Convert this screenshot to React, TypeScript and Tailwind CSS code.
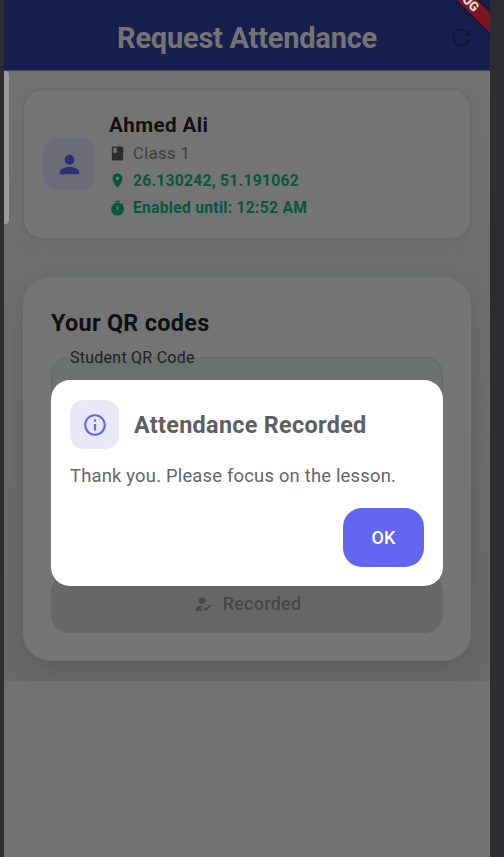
import { MdPerson, MdClass, MdLocationOn, MdTimer, MdInfoOutline, MdRefresh, MdHowToReg } from "react-icons/md";

function Header() {
  return (
    <header className="relative flex h-[71px] shrink-0 items-center justify-center border-b border-[#45485f] bg-[#181f4f] pt-[5px]">
      <h1 className="whitespace-nowrap text-[29px] font-bold leading-9 tracking-[-0.23px] text-[#747474]">Request Attendance</h1>
      <MdRefresh className="absolute right-[15px] top-[24px] size-[27px] text-[#12173a]" />
      <div className="absolute right-0 top-0 h-10 w-16 overflow-hidden">
        <div className="absolute -left-[24px] -top-[12px] flex h-[14px] w-[120px] rotate-45 items-center justify-center bg-[#7c1722] text-[13px] font-black text-[#dddddd] shadow-[0_0_6px_rgba(0,0,0,0.45)]">
          DEBUG
        </div>
      </div>
    </header>
  );
}

function StudentCard() {
  return (
    <section className="flex h-[148px] items-center gap-[14px] rounded-[18px] bg-[#747474] px-[19px] shadow-[0_0_2px_rgba(70,80,78,0.5),0_6px_14px_rgba(80,90,88,0.25)]">
      <div className="flex size-[52px] shrink-0 items-center justify-center rounded-[14px] bg-[#6c6c79]">
        <MdPerson className="size-[29px] text-[#2d2e73]" />
      </div>
      <div className="flex flex-col whitespace-nowrap pt-[5px]">
        <h2 className="-mt-px pb-px text-[20.6px] font-bold leading-[30px] tracking-[0.4px] text-[#101010]">Ahmed Ali</h2>
        <p className="flex h-[27px] items-center gap-[7px] text-[16.4px] tracking-[0.5px] text-[#3d3d3d]">
          <MdClass className="-mt-0.5 size-[17px] text-[#2c2c2c]" />
          Class 1
        </p>
        <p className="flex h-[28px] items-center gap-[7px] text-[15.6px] font-bold tracking-[0.3px] text-[#07573d]">
          <MdLocationOn className="-mt-0.5 size-[17px]" />
          26.130242, 51.191062
        </p>
        <p className="flex h-[27px] items-center gap-[7px] text-[15.6px] font-bold tracking-[0.3px] text-[#07573d]">
          <MdTimer className="-mt-0.5 size-[17px]" />
          Enabled until: 12:52 AM
        </p>
      </div>
    </section>
  );
}

function CodesCard() {
  return (
    <section className="-mx-px mt-[39px] flex h-[384px] flex-col rounded-[28px] bg-[#747474] px-[28px] pt-[30px] shadow-[0_8px_22px_rgba(60,66,64,0.3)]">
      <h2 className="text-[23.4px] font-bold leading-8 tracking-[0.3px] text-[#101010]">Your QR codes</h2>
      <fieldset className="mt-[8px] h-[190px] shrink-0 rounded-[18px] border border-[#626866] bg-[#6c706f] px-[13px]">
        <legend className="px-[5px] pt-0.5 text-[16px] leading-[18px] tracking-[0.25px] text-[#202020]">Student QR Code</legend>
      </fieldset>
      <div className="mb-[28px] mt-auto flex h-[59px] items-center justify-center gap-[10px] rounded-[18px] bg-[#676767] text-[18px] font-medium tracking-[0.25px] text-[#484848]">
        <MdHowToReg className="size-[20px]" />
        Recorded
      </div>
    </section>
  );
}

function AttendanceDialog() {
  return (
    <div role="dialog" className="absolute left-[47px] top-[380px] flex h-[206px] w-[392px] flex-col rounded-[19px] bg-white px-[19px] pt-[20px]">
      <div className="flex items-center gap-[15px]">
        <div className="flex size-[49px] items-center justify-center rounded-[14px] bg-[#e8e8fa]">
          <MdInfoOutline className="size-[26px] text-[#6366e8]" />
        </div>
        <h2 className="whitespace-nowrap pt-[3px] text-[23.4px] font-bold tracking-[0.3px] text-[#606060]">Attendance Recorded</h2>
      </div>
      <p className="mt-[13px] whitespace-nowrap text-[18.4px] leading-7 tracking-[0.2px] text-[#666666]">Thank you. Please focus on the lesson.</p>
      <button className="mt-[18px] h-[59px] w-[81px] self-end rounded-[19px] bg-[#6165f0] pb-px text-[18px] font-medium text-white">OK</button>
    </div>
  );
}

export default function App() {
  return (
    <div className="h-[857px] w-[504px] overflow-hidden bg-[#2c2d31] pl-1 font-[Roboto,sans-serif]">
      <main className="relative flex h-full w-[486px] flex-col overflow-hidden bg-[#717171]">
        <Header />
        <div className="h-[610px] shrink-0 overflow-hidden bg-linear-to-b from-[#717171] via-[#6b6e6d] to-[#696969] px-[20px] pt-[19px]">
          <StudentCard />
          <CodesCard />
        </div>
        <div className="absolute left-0 top-[71px] h-[153px] w-[5px] rounded-r-[4px] bg-[#9b9b9b]" />
        <AttendanceDialog />
      </main>
    </div>
  );
}
